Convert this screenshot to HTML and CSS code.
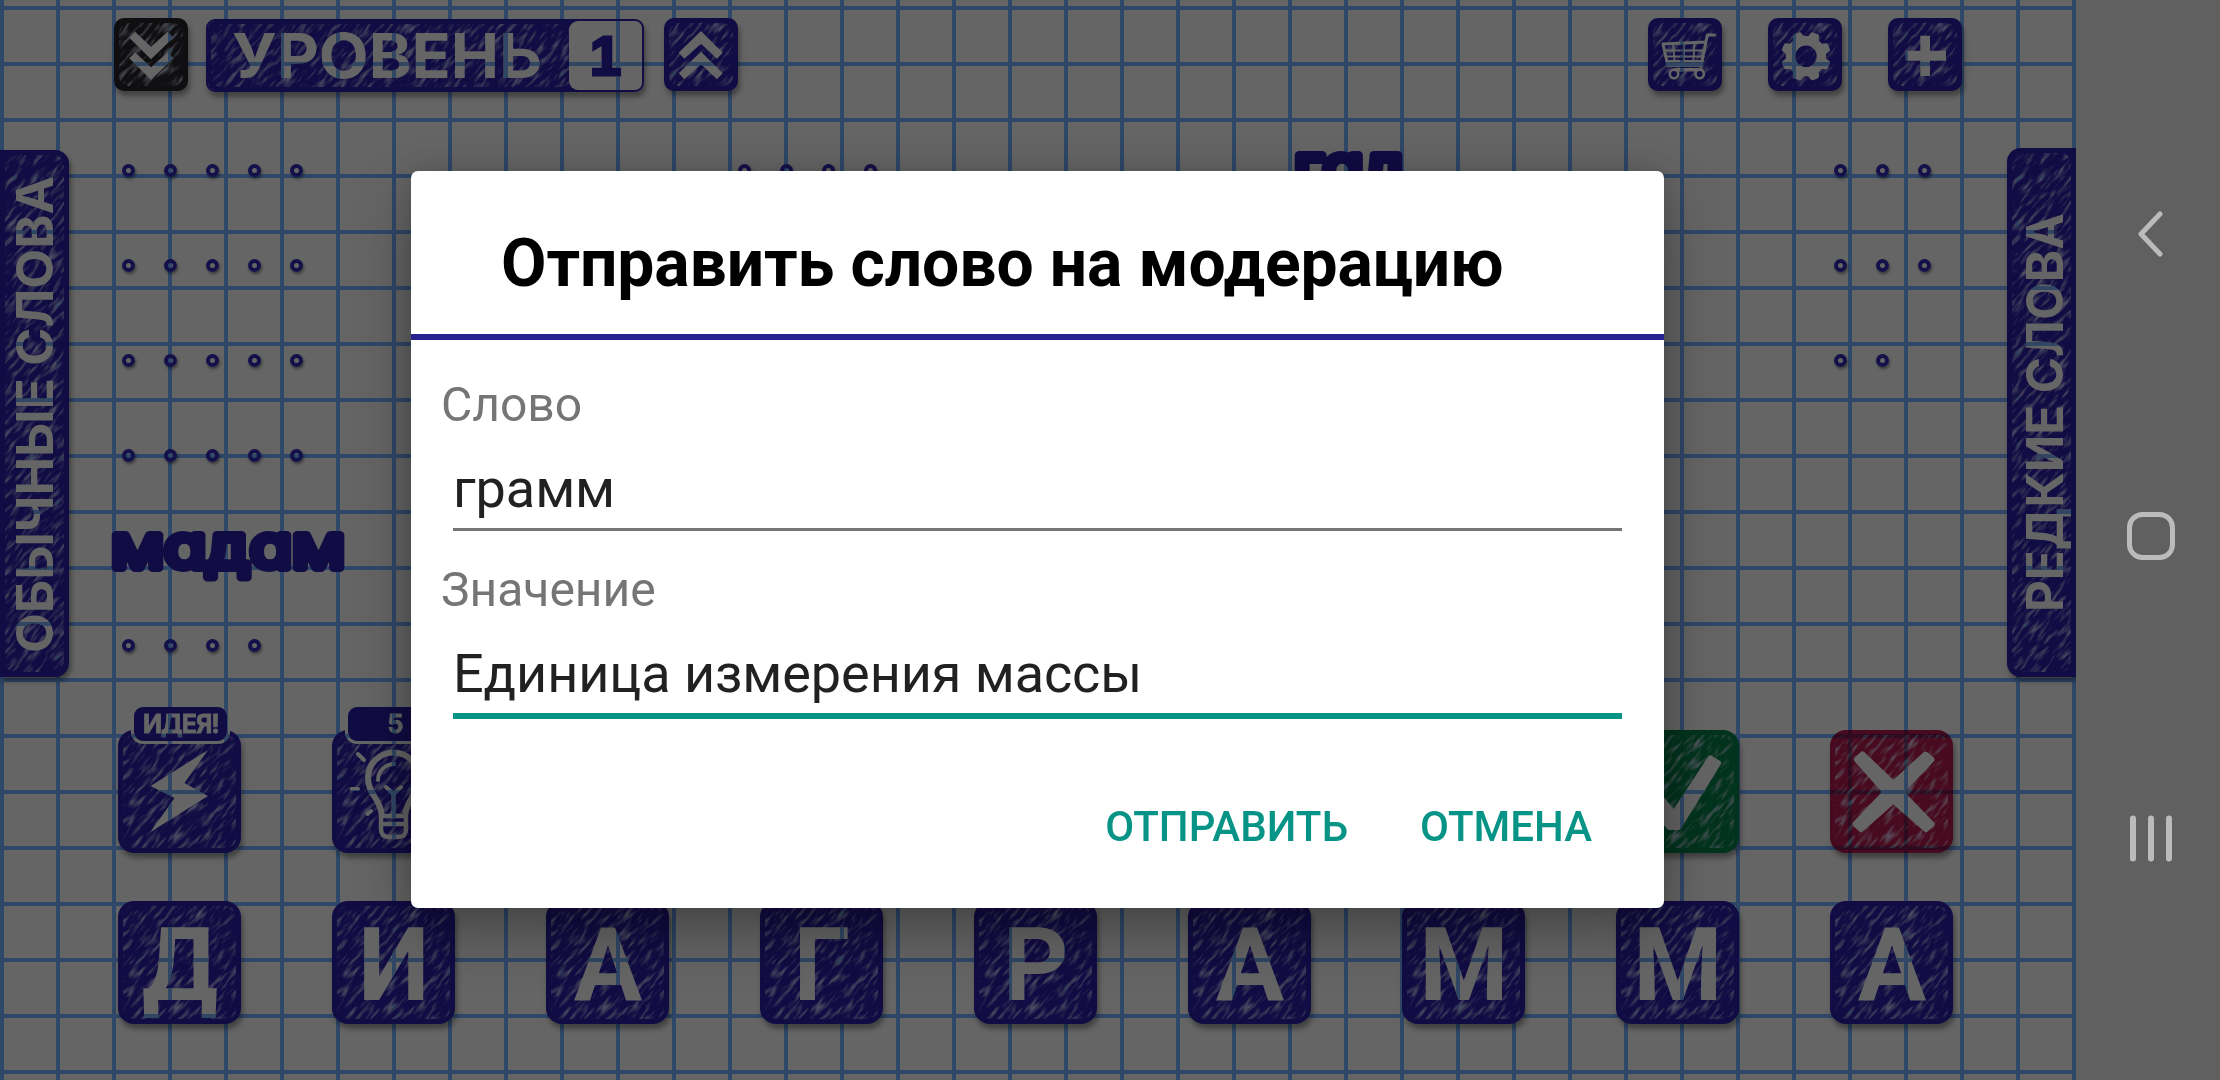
FILE: index.html
```html
<!DOCTYPE html>
<html lang="ru">
<head>
<meta charset="utf-8">
<title>Отправить слово на модерацию</title>
<link rel="stylesheet" href="styles.css">
</head>
<body>
<svg class="defs" width="0" height="0" aria-hidden="true">
  <filter id="scribble" x="0" y="0" width="100%" height="100%" color-interpolation-filters="sRGB">
    <feTurbulence type="fractalNoise" baseFrequency="0.06 0.25" numOctaves="2" seed="7"/>
    <feColorMatrix values="0 0 0 0 .36  0 0 0 0 .36  0 0 0 0 .41  3 0 0 0 -1.43"/>
  </filter>
</svg>
<div class="screen">
  <main class="game">
    <header class="topbar">
      <button class="tile small black"><i class="scribble"></i>
        <svg viewBox="0 0 74 74"><path id="chev" d="M21 13.7 37 28.7 53.700 13.7 59.300 19.700 37 41.300 15.300 19.700ZM21 34.300 37 49.300 53.700 34.300 59.300 40.300 37 61.900 15.300 40.300Z"/></svg>
      </button>
      <div class="level">
        <div class="level-name"><i class="scribble"></i>
          <svg viewBox="0 0 364 73"><text x="26" y="59" textLength="310" lengthAdjust="spacingAndGlyphs">УРОВЕНЬ</text></svg>
        </div>
        <div class="level-num">1</div>
      </div>
      <button class="tile small"><i class="scribble"></i>
        <svg viewBox="0 0 74 74"><use href="#chev" transform="rotate(180 37 37.500)"/></svg>
      </button>
      <div class="tools">
        <button class="tile small"><i class="scribble"></i>
          <svg class="line" viewBox="0 0 74 74">
            <path stroke-width="3" d="M66.300 17H59.300L53 48M15 26 58 24M15 26 19.500 46H53.500"/>
            <path stroke-width="3.500" d="M19.500 47H53M26 51.700H53.500"/>
            <path stroke-width="1.800" d="M16 32.500H57M17 38.500H56M18 43H55M25 26 27 47M35.800 25V47M46.500 25 45 47"/>
            <circle class="wheel" cx="26" cy="56" r="4.200" stroke-width="2.600"/><circle class="wheel" cx="51.700" cy="56" r="4.200" stroke-width="2.600"/>
          </svg>
        </button>
        <button class="tile small"><i class="scribble"></i>
          <svg viewBox="0 0 74 74">
            <circle class="ring" cx="38" cy="38.300" r="15.500"/>
            <g transform="rotate(22.500 38 38.300)">
              <path id="tooth" d="M31.500 22 33.500 15Q34 13.500 35.500 13.500H40.500Q42 13.500 42.500 15L44.500 22Z"/>
              <use href="#tooth" transform="rotate(45 38 38.300)"/><use href="#tooth" transform="rotate(90 38 38.300)"/>
              <use href="#tooth" transform="rotate(135 38 38.300)"/><use href="#tooth" transform="rotate(180 38 38.300)"/>
              <use href="#tooth" transform="rotate(225 38 38.300)"/><use href="#tooth" transform="rotate(270 38 38.300)"/>
              <use href="#tooth" transform="rotate(315 38 38.300)"/>
            </g>
          </svg>
        </button>
        <button class="tile small"><i class="scribble"></i>
          <svg viewBox="0 0 74 74"><path d="M32.300 17.700H42V32.700H58V42.700H42V58H32.300V42.700H17.700V32.700H32.300Z"/></svg>
        </button>
      </div>
    </header>

    <section class="board">
      <div class="tab left"><i class="scribble"></i>
        <svg viewBox="0 0 69 527"><text transform="translate(53 503) rotate(-90)" textLength="477" lengthAdjust="spacingAndGlyphs">ОБЫЧНЫЕ СЛОВА</text></svg>
      </div>
      <div class="words">
        <div class="word"><b></b><b></b><b></b><b></b><b></b></div>
        <div class="word"><b></b><b></b><b></b><b></b><b></b></div>
        <div class="word"><b></b><b></b><b></b><b></b><b></b></div>
        <div class="word"><b></b><b></b><b></b><b></b><b></b></div>
        <div class="word"><svg class="found" viewBox="0 0 250 95"><text x="-11" y="64.500" textLength="234" lengthAdjust="spacingAndGlyphs">мадам</text></svg></div>
        <div class="word"><b></b><b></b><b></b><b></b></div>
      </div>
      <div class="words">
        <div class="word"><b></b><b></b><b></b><b></b></div>
      </div>
      <div class="words">
        <div class="word"><svg class="found" viewBox="0 0 250 95"><text x="3" y="65" textLength="112" lengthAdjust="spacingAndGlyphs">гад</text></svg></div>
      </div>
      <div class="words">
        <div class="word"><b></b><b></b><b></b></div>
        <div class="word"><b></b><b></b><b></b></div>
        <div class="word"><b></b><b></b></div>
      </div>
      <div class="tab right"><i class="scribble"></i>
        <svg viewBox="0 0 69 529"><text transform="translate(56 464) rotate(-90)" textLength="399" lengthAdjust="spacingAndGlyphs">РЕДКИЕ СЛОВА</text></svg>
      </div>
    </section>

    <section class="row actions">
      <button class="tile"><i class="scribble"></i>
        <svg viewBox="0 0 123 123"><path d="M90 20 66.500 53 90 66 32.500 102 56.500 68 32.500 56Z"/></svg>
        <span class="badge">ИДЕЯ!</span>
      </button>
      <button class="tile"><i class="scribble"></i>
        <svg class="line" viewBox="0 0 123 123">
          <path stroke-width="6" d="M49.500 84C49 70 36 64 36 48A25.500 25.500 0 0 1 87 48C87 64 74 70 73.500 84"/>
          <path stroke-width="4" d="M46 50A16 16 0 0 1 62 34M54 57 61.500 64 69 57M61.500 64V85M26 24 32 30M19.500 59H26M35.500 84 39 81"/>
          <path stroke-width="4.500" d="M49 86H74V99Q74 107 66 107H57Q49 107 49 99ZM50 94H73"/>
        </svg>
        <span class="badge">5</span>
      </button>
      <button class="tile green"><i class="scribble"></i>
        <svg viewBox="0 0 123 123"><path class="soft" d="M94.500 28.500 102 33 62.500 97H53.500L26 66 36 58 58 84Z"/></svg>
      </button>
      <button class="tile red"><i class="scribble"></i>
        <svg viewBox="0 0 123 123"><path class="soft" d="M27 29.500 32.500 24.500 63.300 54 95.500 24.500 101.500 29.500 70.500 62.200 101.500 94 96 99 63.300 70.500 31 99 25.500 94 56 62.200Z"/></svg>
      </button>
    </section>

    <section class="row letters">
      <button class="tile"><i class="scribble"></i><span>Д</span></button>
      <button class="tile"><i class="scribble"></i><span>И</span></button>
      <button class="tile"><i class="scribble"></i><span>А</span></button>
      <button class="tile"><i class="scribble"></i><span>Г</span></button>
      <button class="tile"><i class="scribble"></i><span>Р</span></button>
      <button class="tile"><i class="scribble"></i><span>А</span></button>
      <button class="tile"><i class="scribble"></i><span>М</span></button>
      <button class="tile"><i class="scribble"></i><span>М</span></button>
      <button class="tile"><i class="scribble"></i><span>А</span></button>
    </section>

    <div class="lines"></div>

    <div class="overlay">
      <form class="dialog">
        <h1>Отправить слово на модерацию</h1>
        <div class="fields">
          <label for="word">Слово</label>
          <input id="word" value="грамм">
          <label for="meaning">Значение</label>
          <input id="meaning" class="active" value="Единица измерения массы">
        </div>
        <div class="buttons">
          <button type="button">ОТПРАВИТЬ</button>
          <button type="button">ОТМЕНА</button>
        </div>
      </form>
    </div>
  </main>

  <nav class="sysbar">
    <svg viewBox="0 0 50 50"><path d="M34 5 15 25 34 45"/></svg>
    <svg viewBox="0 0 50 50"><rect x="3.500" y="3.500" width="43" height="43" rx="13"/></svg>
    <svg viewBox="0 0 50 50"><path class="bars" d="M7 5.500V45.500M25 5.500V45.500M43 5.500V45.500"/></svg>
  </nav>
</div>
</body>
</html>
```
FILE: styles.css
```css
:root {
  --paper: #656565;
  --rule: #2f4768;
  --ink: #110c43;
  --teal: #079486;
  --grid:
    linear-gradient(90deg, var(--rule) 4px, transparent 4px) 0 0 / 56px 56px,
    linear-gradient(var(--rule) 4px, transparent 4px) 0 6px / 56px 56px;
}
* { box-sizing: border-box; }
body { margin: 0; font-family: Roboto, "Liberation Sans", sans-serif; background: #606060; }
button { border: 0; padding: 0; font-family: inherit; }
.defs { display: block; height: 0; }
.screen { display: flex; width: 2220px; height: 1080px; overflow: hidden; }

.game {
  position: relative;
  isolation: isolate;
  display: flex;
  flex-direction: column;
  width: 2076px;
  height: 1080px;
  overflow: hidden;
  background: var(--grid), var(--paper);
}
/* ruled lines stay visible through light glyphs, not through dark ink */
.lines {
  position: absolute;
  inset: 0;
  background: var(--grid);
  mix-blend-mode: darken;
  pointer-events: none;
}

/* ink tiles */
.tile {
  position: relative;
  width: 123px;
  height: 123px;
  border-radius: 16px;
  background: var(--ink);
  box-shadow: 2px 5px 5px rgba(0, 0, 0, .35);
  color: var(--paper);
}
.tile.small { width: 74px; height: 73px; border-radius: 10px; }
.tile.black { background: #0f0f11; }
.tile.green { background: #02331d; }
.tile.red { background: #480a1e; }
.tile svg { position: relative; display: block; width: 100%; height: auto; fill: var(--paper); }
.tile svg.line { fill: none; stroke: var(--paper); stroke-linecap: round; stroke-linejoin: round; }
.tile .ring { fill: none; stroke: var(--paper); stroke-width: 9.5px; }
.tile .wheel { fill: var(--ink); }
.tile .soft { stroke: var(--paper); stroke-width: 6px; stroke-linejoin: round; }
.scribble { position: absolute; inset: 5px; overflow: hidden; border-radius: 10px; opacity: .8; }
.scribble::before {
  content: "";
  position: absolute;
  left: 50%;
  top: 50%;
  width: 620px;
  height: 620px;
  margin: -310px;
  filter: url(#scribble);
  transform: rotate(-50deg);
}

.topbar { display: flex; padding: 18px 114px 0; height: 123px; flex: none; }
.level {
  display: flex;
  width: 438px;
  height: 73px;
  margin: 1px 20px 0 18px;
  border: 2px solid var(--ink);
  border-radius: 9px;
  overflow: hidden;
  box-shadow: 2px 5px 5px rgba(0, 0, 0, .35);
}
.level-name { position: relative; width: 371px; margin: -2px; background: var(--ink); }
.level-name svg { position: relative; display: block; width: 364px; height: 73px; fill: var(--paper); }
.level-name text { font: 700 62px Inter, Arial, sans-serif; }
.level-num {
  position: relative;
  width: 73px;
  margin-left: -6px;
  border-radius: 9px;
  background: var(--paper);
  color: var(--ink);
  font: 700 56px/70px "Liberation Sans", Arial, sans-serif;
  text-align: center;
  -webkit-text-stroke: 3px var(--ink);
  paint-order: stroke;
}
.tools { display: flex; gap: 46px; margin-left: auto; }

.board {
  display: grid;
  grid-template-columns: 121.5px 616px 553px 543px 173.500px 69px;
  height: 606px;
  flex: none;
}
.tab { position: relative; width: 69px; background: var(--ink); box-shadow: 2px 4px 5px rgba(0, 0, 0, .4); }
.tab.left { height: 527px; margin-top: 27px; border-radius: 0 14px 14px 0; }
.tab.right { height: 529px; margin-top: 25px; border-radius: 14px 0 0 14px; }
.tab svg { position: relative; display: block; width: 69px; fill: var(--paper); }
.tab text { font: 700 51px Inter, Arial, sans-serif; }
.word { display: flex; align-items: center; gap: 29px; height: 95px; }
.word b {
  width: 13px;
  height: 13px;
  border: 4.500px solid #14104a;
  border-radius: 50%;
  box-shadow: 1px 2px 3px rgba(0, 0, 0, .45);
}
.found { width: 250px; height: 95px; overflow: visible; fill: var(--ink); }
.found text {
  font: 400 60px Inter, sans-serif;
  font-feature-settings: "cv11";
  stroke: var(--ink);
  stroke-width: 8px;
  stroke-linejoin: round;
}

.row {
  display: grid;
  grid-template-columns: repeat(9, 123px);
  column-gap: 91px;
  padding-left: 118.400px;
  flex: none;
}
.actions { height: 172px; padding-top: 1px; }
.actions .green { grid-column: 8; }
.actions .red { grid-column: 9; }
.badge {
  position: absolute;
  left: 16px;
  top: -23px;
  width: 93px;
  height: 34px;
  border-radius: 9px;
  background: var(--ink);
  box-shadow: 0 0 0 3px var(--paper);
  font: 700 25px/35px Inter, sans-serif;
  letter-spacing: -1px;
  -webkit-text-stroke: .8px var(--paper);
}
.letters span { position: relative; display: block; font-weight: 700; font-size: 102px; line-height: 128px; }

/* dialog */
.overlay { position: absolute; inset: 0; display: grid; place-items: center; }
.dialog {
  width: 1253px;
  height: 737px;
  margin: 0 1px 1px 0;
  border-radius: 7px;
  background: #fff;
  box-shadow: 0 24px 60px rgba(0, 0, 0, .3), 0 0 24px rgba(0, 0, 0, .12);
}
.dialog h1 {
  margin: 0;
  height: 169px;
  padding: 54px 0 0 90px;
  border-bottom: 6px solid #262290;
  font-size: 66px;
  letter-spacing: -.11px;
  line-height: 77px;
  color: #000;
  white-space: nowrap;
}
.fields { display: flex; flex-direction: column; padding: 37px 42px 0 30px; }
.fields label { font-size: 48px; line-height: 56px; color: #757575; }
.fields input {
  height: 98px;
  margin: 0 0 31px 12px;
  padding: 16px 0 0;
  border: 0;
  border-bottom: 3px solid #757575;
  outline: 0;
  font: 54px Roboto, sans-serif;
  letter-spacing: -.08px;
  color: #212121;
}
.fields input.active { height: 101px; border-bottom: 6px solid var(--teal); }
.buttons { display: flex; justify-content: flex-end; gap: 72px; padding: 52px 72px 0 0; }
.buttons button { background: none; color: var(--teal); font-weight: 500; font-size: 42px; line-height: 50px; }

.sysbar { display: flex; flex-direction: column; justify-content: center; align-items: center; gap: 252px; width: 144px; padding: 0 0 9px 6px; }
.sysbar svg { width: 50px; height: 50px; fill: none; stroke: #bbb; stroke-width: 5px; stroke-linecap: round; stroke-linejoin: round; }
.sysbar .bars { stroke-width: 6px; }
```
